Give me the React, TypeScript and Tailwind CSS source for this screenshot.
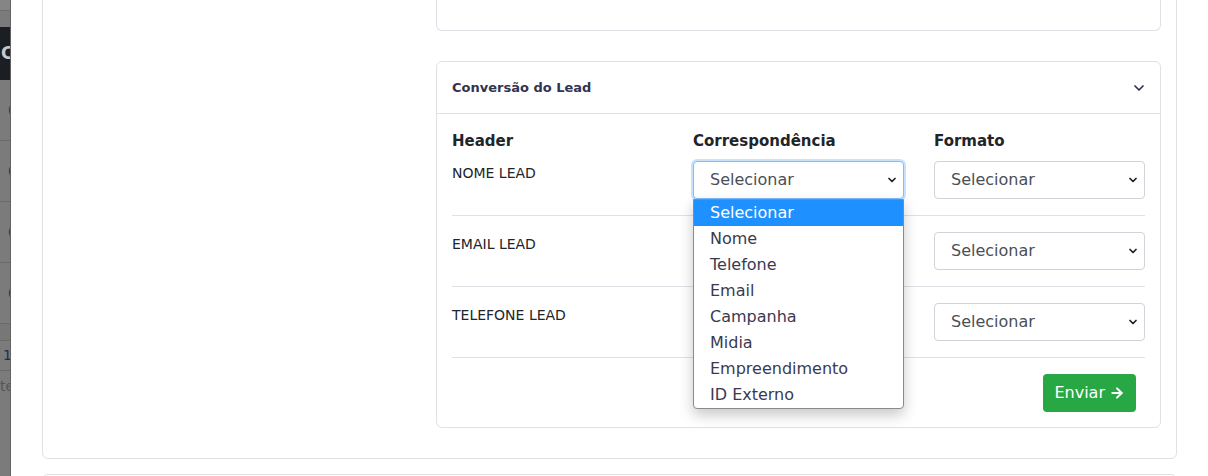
import { ArrowRight, ChevronDown } from "lucide-react";

const rows = ["NOME LEAD", "EMAIL LEAD", "TELEFONE LEAD"];

const options = [
  "Selecionar",
  "Nome",
  "Telefone",
  "Email",
  "Campanha",
  "Midia",
  "Empreendimento",
  "ID Externo",
];

const SelectBox = ({ focused }: { focused?: boolean }) => (
  <div
    className={`h-[38px] w-full rounded-[4px] border bg-white pl-4 pr-[5px] flex items-center justify-between text-[16px] text-[#4b4f56] ${
      focused
        ? "border-[#80bdff] shadow-[0_0_0_2px_rgba(0,123,255,0.22)]"
        : "border-[#ced4da]"
    }`}
  >
    <span>Selecionar</span>
    <ChevronDown size={12} strokeWidth={3.5} className="text-[#222]" />
  </div>
);

const App = () => {
  return (
    <div
      className="w-[1208px] h-[476px] overflow-hidden flex bg-white"
      style={{ fontFamily: '"DejaVu Sans", "Liberation Sans", sans-serif' }}
    >
      {/* page behind the modal */}
      <div className="w-[11px] shrink-0 h-full bg-[#7b7b7b] border-r border-[#626262] flex flex-col overflow-hidden text-[14px] text-[#3a3a3a]">
        <div className="h-[11px] bg-[#858585] border-b border-[#6d6d6d]" />
        <div className="h-[16px]" />
        <div className="h-[53px] bg-[#1b1f23] text-[#c8c8c8] font-bold text-[17px] flex items-center pl-[1px]">
          C
        </div>
        <div className="h-[61px] border-b border-[#6a6a6a] flex items-center pl-[8px]">0</div>
        <div className="h-[61px] border-b border-[#6a6a6a] flex items-center pl-[8px]">0</div>
        <div className="h-[61px] border-b border-[#6a6a6a] flex items-center pl-[8px]">0</div>
        <div className="h-[61px] border-b border-[#6a6a6a] flex items-center pl-[8px]">0</div>
        <div className="h-[17px] border-b border-[#6a6a6a] bg-[#777]" />
        <div className="h-[30px] border-b border-[#6a6a6a] flex items-center pl-[3px] text-[#2a2a45]">
          10
        </div>
        <div className="h-[30px] flex items-center text-[#555]">te</div>
      </div>

      {/* modal body */}
      <div className="flex-1 pl-[31px] pr-[31px]">
        <div className="-mt-[21px] h-[480px] border border-[#dee2e6] rounded-[6px] flex pl-[393px] pr-[15px] pb-[30px]">
          <div className="flex-1 flex flex-col">
            <div className="h-[51px] shrink-0 border border-t-0 border-[#dee2e6] rounded-b-[6px]" />
            <div className="mt-[30px] shrink-0 border border-[#dee2e6] rounded-[6px]">
              <div className="h-[52px] border-b border-[#dee2e6] flex items-center justify-between pl-[15px] pr-[13px]">
                <span className="text-[13px] font-bold text-[#33334f]">
                  Conversão do Lead
                </span>
                <ChevronDown size={16} strokeWidth={2.5} className="text-[#2d2d4d]" />
              </div>
              <div className="px-[15px] pt-[15px] pb-[15px]">
                <div className="grid grid-cols-3 gap-x-[30px] text-[15px] font-bold text-[#212529] leading-[24px] mb-[8px]">
                  <div>Header</div>
                  <div>Correspondência</div>
                  <div>Formato</div>
                </div>
                {rows.map((r, i) => (
                  <div
                    key={r}
                    className={`grid grid-cols-3 gap-x-[30px] pb-4 border-b border-[#dee2e6] ${
                      i > 0 ? "pt-4" : ""
                    }`}
                  >
                    <div className="text-[14px] text-[#212529] leading-[24px]">{r}</div>
                    <div className="relative">
                      <SelectBox focused={i === 0} />
                      {i === 0 && (
                        <div className="absolute z-10 left-0 top-[38px] w-full bg-white border border-[#8a8a8a] rounded-b-[4px] shadow-[0_6px_14px_rgba(0,0,0,0.22)] overflow-hidden">
                          {options.map((o, j) => (
                            <div
                              key={o}
                              className={`h-[26px] pl-4 flex items-center text-[16px] ${
                                j === 0
                                  ? "bg-[#1e90ff] text-white"
                                  : "text-[#3a3a50]"
                              }`}
                            >
                              {o}
                            </div>
                          ))}
                        </div>
                      )}
                    </div>
                    <div>
                      <SelectBox />
                    </div>
                  </div>
                ))}
                <div className="flex justify-end pt-4 pr-[9px]">
                  <button className="h-[38px] px-[11px] rounded-[4px] bg-[#28a745] text-white text-[16px] flex items-center gap-[4px]">
                    Enviar
                    <ArrowRight size={16} strokeWidth={3} />
                  </button>
                </div>
              </div>
            </div>
          </div>
        </div>
        <div className="mt-[15px] h-[20px] border border-[#dee2e6] rounded-t-[6px]" />
      </div>
    </div>
  );
};

export default App;
